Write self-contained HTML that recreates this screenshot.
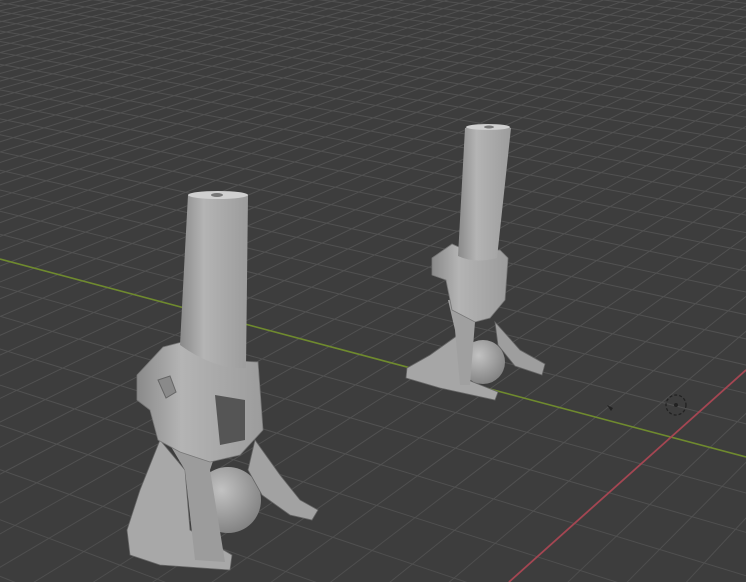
<!DOCTYPE html>
<html><head><meta charset="utf-8"><style>
html,body{margin:0;padding:0;background:#3d3d3d;overflow:hidden;width:746px;height:582px}
svg{display:block}
</style></head><body>
<svg id="s" width="746" height="582" viewBox="0 0 746 582" xmlns="http://www.w3.org/2000/svg">
<defs>
<linearGradient id="g1" x1="0" x2="1"><stop offset="0" stop-color="#8a8a8a"/><stop offset="0.35" stop-color="#b4b4b4"/><stop offset="1" stop-color="#9c9c9c"/></linearGradient>
<radialGradient id="sp" cx="0.4" cy="0.35" r="0.7"><stop offset="0" stop-color="#c2c2c2"/><stop offset="1" stop-color="#808080"/></radialGradient>
</defs>
<rect width="746" height="582" fill="#3d3d3d"/>
<g id="grid"></g>
<line x1="0" y1="259" x2="746" y2="457" stroke="#6f8a2e" stroke-width="1.6"/>
<line x1="509" y1="582" x2="746" y2="370" stroke="#a44652" stroke-width="1.8"/>
<circle cx="676" cy="405" r="10" fill="none" stroke="#222" stroke-width="1.3" stroke-dasharray="3 2"/>
<circle cx="676" cy="405" r="2" fill="#222"/>
<path d="M607 405 l6 3 l-2 3z" fill="#222"/>
<g>
<path d="M465 330 L430 355 L407 368 L406 378 L440 388 L495 400 L498 392 L468 380 L470 340Z" fill="#a6a6a6" stroke="#666" stroke-width="0.8"/>
<circle cx="483" cy="362" r="22" fill="url(#sp)"/>
<path d="M495 322 L520 350 L545 364 L542 375 L515 366 L498 345Z" fill="#9e9e9e" stroke="#666" stroke-width="0.8"/>
<path d="M448 300 L455 330 L460 385 L470 385 L475 322 L492 300Z" fill="#a0a0a0"/>
<path d="M432 258 L452 244 L470 252 L500 250 L508 258 L505 300 L490 318 L475 322 L452 310 L446 280 L432 275Z" fill="url(#g1)" stroke="#777" stroke-width="0.8"/>
<path d="M465 128 Q488 122 511 128 L497 258 Q475 264 458 256Z" fill="url(#g1)"/>
<ellipse cx="488" cy="127" rx="22" ry="3" fill="#cfcfcf"/>
<ellipse cx="489" cy="127" rx="5" ry="1.5" fill="#777"/>
</g>
<g>
<path d="M160 440 L140 490 L127 530 L130 555 L160 565 L230 570 L232 555 L190 530 L185 470Z" fill="#a8a8a8" stroke="#666" stroke-width="0.8"/>
<circle cx="228" cy="500" r="33" fill="url(#sp)"/>
<path d="M255 440 L280 475 L300 500 L318 510 L312 520 L290 515 L262 495 L248 470Z" fill="#a2a2a2" stroke="#666" stroke-width="0.8"/>
<path d="M170 445 L185 470 L195 560 L225 562 L210 470 L215 455Z" fill="#9c9c9c"/>
<path d="M137 375 L163 347 L182 342 L220 360 L258 362 L263 430 L240 455 L210 462 L180 452 L158 440 L150 410 L137 400Z" fill="url(#g1)" stroke="#777" stroke-width="0.8"/>
<path d="M215 395 L245 400 L245 440 L220 445Z" fill="#555"/>
<path d="M158 380 l12 -4 l6 16 l-10 6z" fill="#8a8a8a" stroke="#666"/>
<path d="M188 195 Q218 188 248 195 L246 368 Q215 370 180 345 L185 250Z" fill="url(#g1)"/>
<ellipse cx="218" cy="195" rx="30" ry="4" fill="#d0d0d0"/>
<ellipse cx="217" cy="195" rx="6" ry="2" fill="#777"/>
</g>
</svg>
<script>
(function(){
var O=[671,437],V1=[-2300,-350],V2=[1552,-350],s1=0.013,s2=0.033;
function P(u,v){var d=s1*u+s2*v+1;return [(s1*u*V1[0]+s2*v*V2[0]+O[0])/d,(s1*u*V1[1]+s2*v*V2[1]+O[1])/d,d];}
var h='';
function add(pts){for(var i=0;i<pts.length-1;i++){var a=pts[i],b=pts[i+1];var d=Math.min(a[2],b[2]);var o=Math.max(0,Math.min(1,(d-0.1)*1.2));if(o<=0)continue;
 if((a[0]<-50&&b[0]<-50)||(a[0]>800&&b[0]>800)||(a[1]<-50&&b[1]<-50)||(a[1]>640&&b[1]>640))continue;
 h+='<line stroke-opacity="'+o.toFixed(2)+'" x1="'+a[0].toFixed(1)+'" y1="'+a[1].toFixed(1)+'" x2="'+b[0].toFixed(1)+'" y2="'+b[1].toFixed(1)+'"/>';}}
for(var k=-300;k<=60;k++){var pts=[];for(var v=-60;v<=300;v+=3){var p=P(k,v);if(p[2]>0.1)pts.push(p);}add(pts);}
for(var k=-60;k<=300;k++){var pts=[];for(var u=-300;u<=60;u+=3){var p=P(u,k);if(p[2]>0.1)pts.push(p);}add(pts);}
var g=document.getElementById('grid');
g.setAttribute('stroke','#515151');g.setAttribute('stroke-width','1');
g.innerHTML=h;
})();
</script>
</body></html>
